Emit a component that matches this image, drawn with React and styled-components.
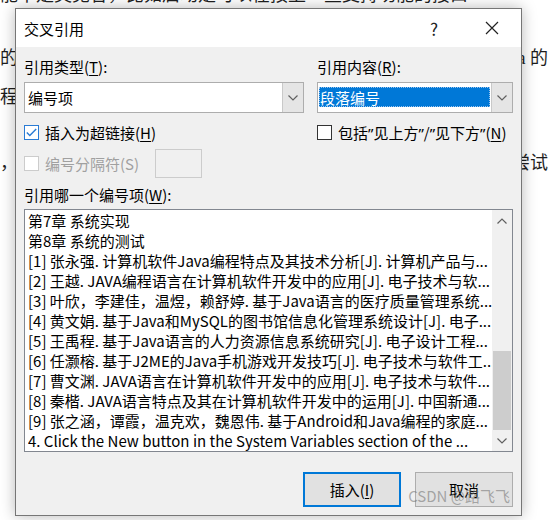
import React from "react";
import styled, { createGlobalStyle } from "styled-components";

const GlobalStyle = createGlobalStyle`
  html, body {
    margin: 0;
    padding: 0;
    background: #fff;
  }
`;

const Page = styled.div`
  position: relative;
  width: 548px;
  height: 520px;
  overflow: hidden;
  background: #fff;
`;

const Doc = styled.div`
  display: flex;
  flex-direction: column;
  font-family: "Liberation Serif", "Noto Sans CJK SC", serif;
  font-size: 18px;
  color: #1e1e1e;
`;

const DocLine = styled.div`
  display: flex;
  justify-content: space-between;
  height: 20px;
  line-height: 20px;
  margin-top: ${(p) => p.$gap}px;
  white-space: nowrap;
`;

const Dialog = styled.div`
  position: absolute;
  left: 15px;
  top: 8px;
  width: 507px;
  height: 508px;
  box-sizing: border-box;
  border: 1px solid #767676;
  background: #f0f0f0;
  box-shadow: 0 0 14px rgba(0, 0, 0, 0.28);
  display: flex;
  flex-direction: column;
  font-family: "Noto Sans CJK SC", "Noto Sans", sans-serif;
  font-size: 15px;
  color: #000;
`;

const TitleBar = styled.div`
  height: 38px;
  background: #fff;
  display: flex;
  align-items: center;
  padding-left: 8px;
`;

const Title = styled.div`
  flex: 1;
`;

const TitleButton = styled.div`
  width: 58px;
  height: 38px;
  display: flex;
  align-items: center;
  justify-content: center;
  font-size: 17px;
  color: #222;
`;

const Body = styled.div`
  flex: 1;
  display: flex;
  flex-direction: column;
  padding: 10px 8px 8px;
`;

const Columns = styled.div`
  display: flex;
  gap: 13px;
`;

const Column = styled.div`
  width: ${(p) => p.$w}px;
  display: flex;
  flex-direction: column;
`;

const Label = styled.div`
  height: 20px;
  line-height: 20px;
  margin-top: ${(p) => p.$gap || 0}px;
  white-space: nowrap;
`;

const Key = styled.span`
  text-decoration: underline;
  text-underline-offset: 2px;
`;

const Quote = styled.span`
  font-family: "Noto Sans", sans-serif;
`;

const Combo = styled.div`
  margin-top: 5px;
  height: 31px;
  box-sizing: border-box;
  border: 1px solid #adadad;
  background: #fff;
  display: flex;
`;

const ComboText = styled.div`
  flex: 1;
  display: flex;
  align-items: center;
  padding-left: 3px;
`;

const Selected = styled.div`
  flex: 1;
  margin: 4px 1px 5px 1px;
  padding-left: 1px;
  background: #0078d7;
  color: #fff;
  outline: 1px dotted #9ac4ee;
  outline-offset: -1px;
  display: flex;
  align-items: center;
`;

const DropButton = styled.div`
  width: 20px;
  border-left: 1px solid #c9c9c9;
  background: #e5e5e5;
  display: flex;
  align-items: center;
  justify-content: center;
`;

const CheckRow = styled.div`
  margin-top: ${(p) => (p.$flush ? 0 : 9)}px;
  height: 20px;
  display: flex;
  align-items: center;
  gap: 6px;
  white-space: nowrap;
  color: ${(p) => (p.$disabled ? "#a0a0a0" : "#000")};
`;

const Box = styled.div`
  flex-shrink: 0;
  width: 15px;
  height: 15px;
  box-sizing: border-box;
  border: 1px solid ${(p) => (p.$checked ? "#2a7bd4" : p.$disabled ? "#cccccc" : "#333")};
  background: #fff;
  display: flex;
  align-items: center;
  justify-content: center;
`;

const SeparatorRow = styled.div`
  margin-top: 7px;
  height: 29px;
  display: grid;
  grid-template-columns: 131px 47px;
  align-items: center;
`;

const DisabledInput = styled.div`
  height: 29px;
  box-sizing: border-box;
  border: 1px solid #cccccc;
  background: #f0f0f0;
`;

const ListBox = styled.div`
  margin-top: 4px;
  height: 243px;
  box-sizing: border-box;
  border: 1px solid #828790;
  background: #fff;
  display: flex;
`;

const Items = styled.div`
  flex: 1;
  min-width: 0;
  padding: 1px 0 0 3px;
  overflow: hidden;
`;

const Item = styled.div`
  height: 20px;
  line-height: 20px;
  white-space: nowrap;
  overflow: hidden;
`;

const ScrollBar = styled.div`
  width: 20px;
  background: #f0f0f0;
  display: flex;
  flex-direction: column;
`;

const Arrow = styled.div`
  height: 21px;
  display: flex;
  align-items: center;
  justify-content: center;
`;

const Track = styled.div`
  flex: 1;
  display: flex;
  flex-direction: column;
  justify-content: flex-end;
`;

const Thumb = styled.div`
  height: 79px;
  margin: 0 1px;
  background: #cdcdcd;
`;

const Buttons = styled.div`
  margin-top: auto;
  display: flex;
  justify-content: flex-end;
  gap: 14px;
`;

const Button = styled.div`
  width: 98px;
  height: 35px;
  box-sizing: border-box;
  border: ${(p) => (p.$primary ? "2px solid #0078d7" : "1px solid #adadad")};
  background: #e1e1e1;
  display: flex;
  align-items: center;
  justify-content: center;
`;

const Watermark = styled.div`
  position: absolute;
  right: 38px;
  bottom: 14px;
  font-family: "Noto Sans CJK SC", "Noto Sans", sans-serif;
  font-size: 15px;
  color: rgba(110, 110, 110, 0.55);
  pointer-events: none;
`;

const Chevron = ({ up }) => (
  <svg width="10" height="6" viewBox="0 0 10 6">
    <path
      d={up ? "M0.5 5.5 L5 1 L9.5 5.5" : "M0.5 0.5 L5 5 L9.5 0.5"}
      fill="none"
      stroke="#606060"
      strokeWidth="1.2"
    />
  </svg>
);

const CheckMark = () => (
  <svg width="11" height="9" viewBox="0 0 11 9">
    <path d="M0.8 4.6 L3.8 7.6 L10.2 1" fill="none" stroke="#2a7bd4" strokeWidth="1.4" />
  </svg>
);

const items = [
  "第7章 系统实现",
  "第8章 系统的测试",
  "[1] 张永强. 计算机软件Java编程特点及其技术分析[J]. 计算机产品与...",
  "[2] 王越. JAVA编程语言在计算机软件开发中的应用[J]. 电子技术与软...",
  "[3] 叶欣，李建佳，温煜，赖舒婷. 基于Java语言的医疗质量管理系统...",
  "[4] 黄文娟. 基于Java和MySQL的图书馆信息化管理系统设计[J]. 电子...",
  "[5] 王禹程. 基于Java语言的人力资源信息系统研究[J]. 电子设计工程...",
  "[6] 任灏榕. 基于J2ME的Java手机游戏开发技巧[J]. 电子技术与软件工...",
  "[7] 曹文渊. JAVA语言在计算机软件开发中的应用[J]. 电子技术与软件...",
  "[8] 秦楷. JAVA语言特点及其在计算机软件开发中的运用[J]. 中国新通...",
  "[9] 张之涵，谭霞，温克欢，魏恩伟. 基于Android和Java编程的家庭...",
  "4. Click the New button in the System Variables section of the ...",
];

export default function App() {
  return (
    <Page>
      <GlobalStyle />
      <Doc>
        <DocLine $gap={-15}>
          <span>能中是英见各，比如启动是可以在按上一些支持功能的接口</span>
        </DocLine>
        <DocLine $gap={43}>
          <span>的</span>
          <span>a 的</span>
        </DocLine>
        <DocLine $gap={19}>
          <span>程</span>
        </DocLine>
        <DocLine $gap={46}>
          <span>，</span>
          <span>尝试</span>
        </DocLine>
      </Doc>

      <Dialog>
        <TitleBar>
          <Title>交叉引用</Title>
          <TitleButton>?</TitleButton>
          <TitleButton>
            <svg width="14" height="14" viewBox="0 0 14 14">
              <path d="M1 1 L13 13 M13 1 L1 13" stroke="#222" strokeWidth="1.2" />
            </svg>
          </TitleButton>
        </TitleBar>
        <Body>
          <Columns>
            <Column $w={280}>
              <Label>
                引用类型(<Key>T</Key>):
              </Label>
              <Combo>
                <ComboText>编号项</ComboText>
                <DropButton>
                  <Chevron />
                </DropButton>
              </Combo>
              <CheckRow>
                <Box $checked>
                  <CheckMark />
                </Box>
                <span>
                  插入为超链接(<Key>H</Key>)
                </span>
              </CheckRow>
              <SeparatorRow>
                <CheckRow $disabled $flush>
                  <Box $disabled />
                  <span>编号分隔符(S)</span>
                </CheckRow>
                <DisabledInput />
              </SeparatorRow>
            </Column>
            <Column $w={196}>
              <Label>
                引用内容(<Key>R</Key>):
              </Label>
              <Combo>
                <Selected>段落编号</Selected>
                <DropButton>
                  <Chevron />
                </DropButton>
              </Combo>
              <CheckRow>
                <Box />
                <span>
                  包括<Quote>”</Quote>见上方<Quote>”</Quote>/<Quote>”</Quote>见下方<Quote>”</Quote>(<Key>N</Key>)
                </span>
              </CheckRow>
            </Column>
          </Columns>
          <Label $gap={7}>
            引用哪一个编号项(<Key>W</Key>):
          </Label>
          <ListBox>
            <Items>
              {items.map((t) => (
                <Item key={t}>{t}</Item>
              ))}
            </Items>
            <ScrollBar>
              <Arrow>
                <Chevron up />
              </Arrow>
              <Track>
                <Thumb />
              </Track>
              <Arrow>
                <Chevron />
              </Arrow>
            </ScrollBar>
          </ListBox>
          <Buttons>
            <Button $primary>
              插入(<Key>I</Key>)
            </Button>
            <Button>取消</Button>
          </Buttons>
        </Body>
      </Dialog>
      <Watermark>CSDN @路飞飞</Watermark>
    </Page>
  );
}
